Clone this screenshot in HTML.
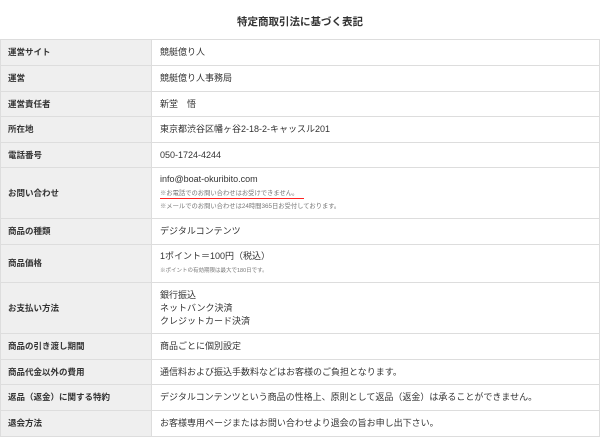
<!DOCTYPE html>
<html><head><meta charset="utf-8"><style>
body{margin:0;background:#fff;font-family:"Liberation Sans","Noto Sans CJK JP",sans-serif;color:#333;}
h1{position:absolute;top:14px;left:0;width:600px;text-align:center;font-size:10.5px;font-weight:bold;margin:0;color:#333}
table{position:absolute;top:39px;left:0;width:600px;border-collapse:collapse;}
td{border:1px solid #ddd;font-size:9px;padding:0 0 0 7px;vertical-align:middle;line-height:13px}
td.h{background:#efefef;width:143px;font-weight:bold;font-size:8.5px}
td.v{padding-left:8px}
.s{font-size:6.3px;color:#777;line-height:12px}
.u{border-bottom:1px solid #f22;display:inline-block;line-height:9px;padding-right:6px}
</style></head><body>
<h1>特定商取引法に基づく表記</h1>
<table>
<tr style="height:26px"><td class="h">運営サイト</td><td class="v">競艇億り人</td></tr>
<tr style="height:26px"><td class="h">運営</td><td class="v">競艇億り人事務局</td></tr>
<tr style="height:25px"><td class="h">運営責任者</td><td class="v">新堂　悟</td></tr>
<tr style="height:26px"><td class="h">所在地</td><td class="v">東京都渋谷区幡ヶ谷2-18-2-キャッスル201</td></tr>
<tr style="height:25px"><td class="h">電話番号</td><td class="v">050-1724-4244</td></tr>
<tr style="height:51px"><td class="h">お問い合わせ</td><td class="v">info@boat-okuribito.com<br><span class="s u">※お電話でのお問い合わせはお受けできません。</span><br><span class="s">※メールでのお問い合わせは24時間365日お受付しております。</span></td></tr>
<tr style="height:26px"><td class="h">商品の種類</td><td class="v">デジタルコンテンツ</td></tr>
<tr style="height:38px"><td class="h">商品価格</td><td class="v">1ポイント＝100円（税込）<br><span class="s" style="font-size:5.5px">※ポイントの有効期限は最大で180日です。</span></td></tr>
<tr style="height:51px"><td class="h">お支払い方法</td><td class="v">銀行振込<br>ネットバンク決済<br>クレジットカード決済</td></tr>
<tr style="height:26px"><td class="h">商品の引き渡し期間</td><td class="v">商品ごとに個別設定</td></tr>
<tr style="height:25px"><td class="h">商品代金以外の費用</td><td class="v">通信料および振込手数料などはお客様のご負担となります。</td></tr>
<tr style="height:26px"><td class="h">返品（返金）に関する特約</td><td class="v">デジタルコンテンツという商品の性格上、原則として返品（返金）は承ることができません。</td></tr>
<tr style="height:26px"><td class="h">退会方法</td><td class="v">お客様専用ページまたはお問い合わせより退会の旨お申し出下さい。</td></tr>
</table>
</body></html>
